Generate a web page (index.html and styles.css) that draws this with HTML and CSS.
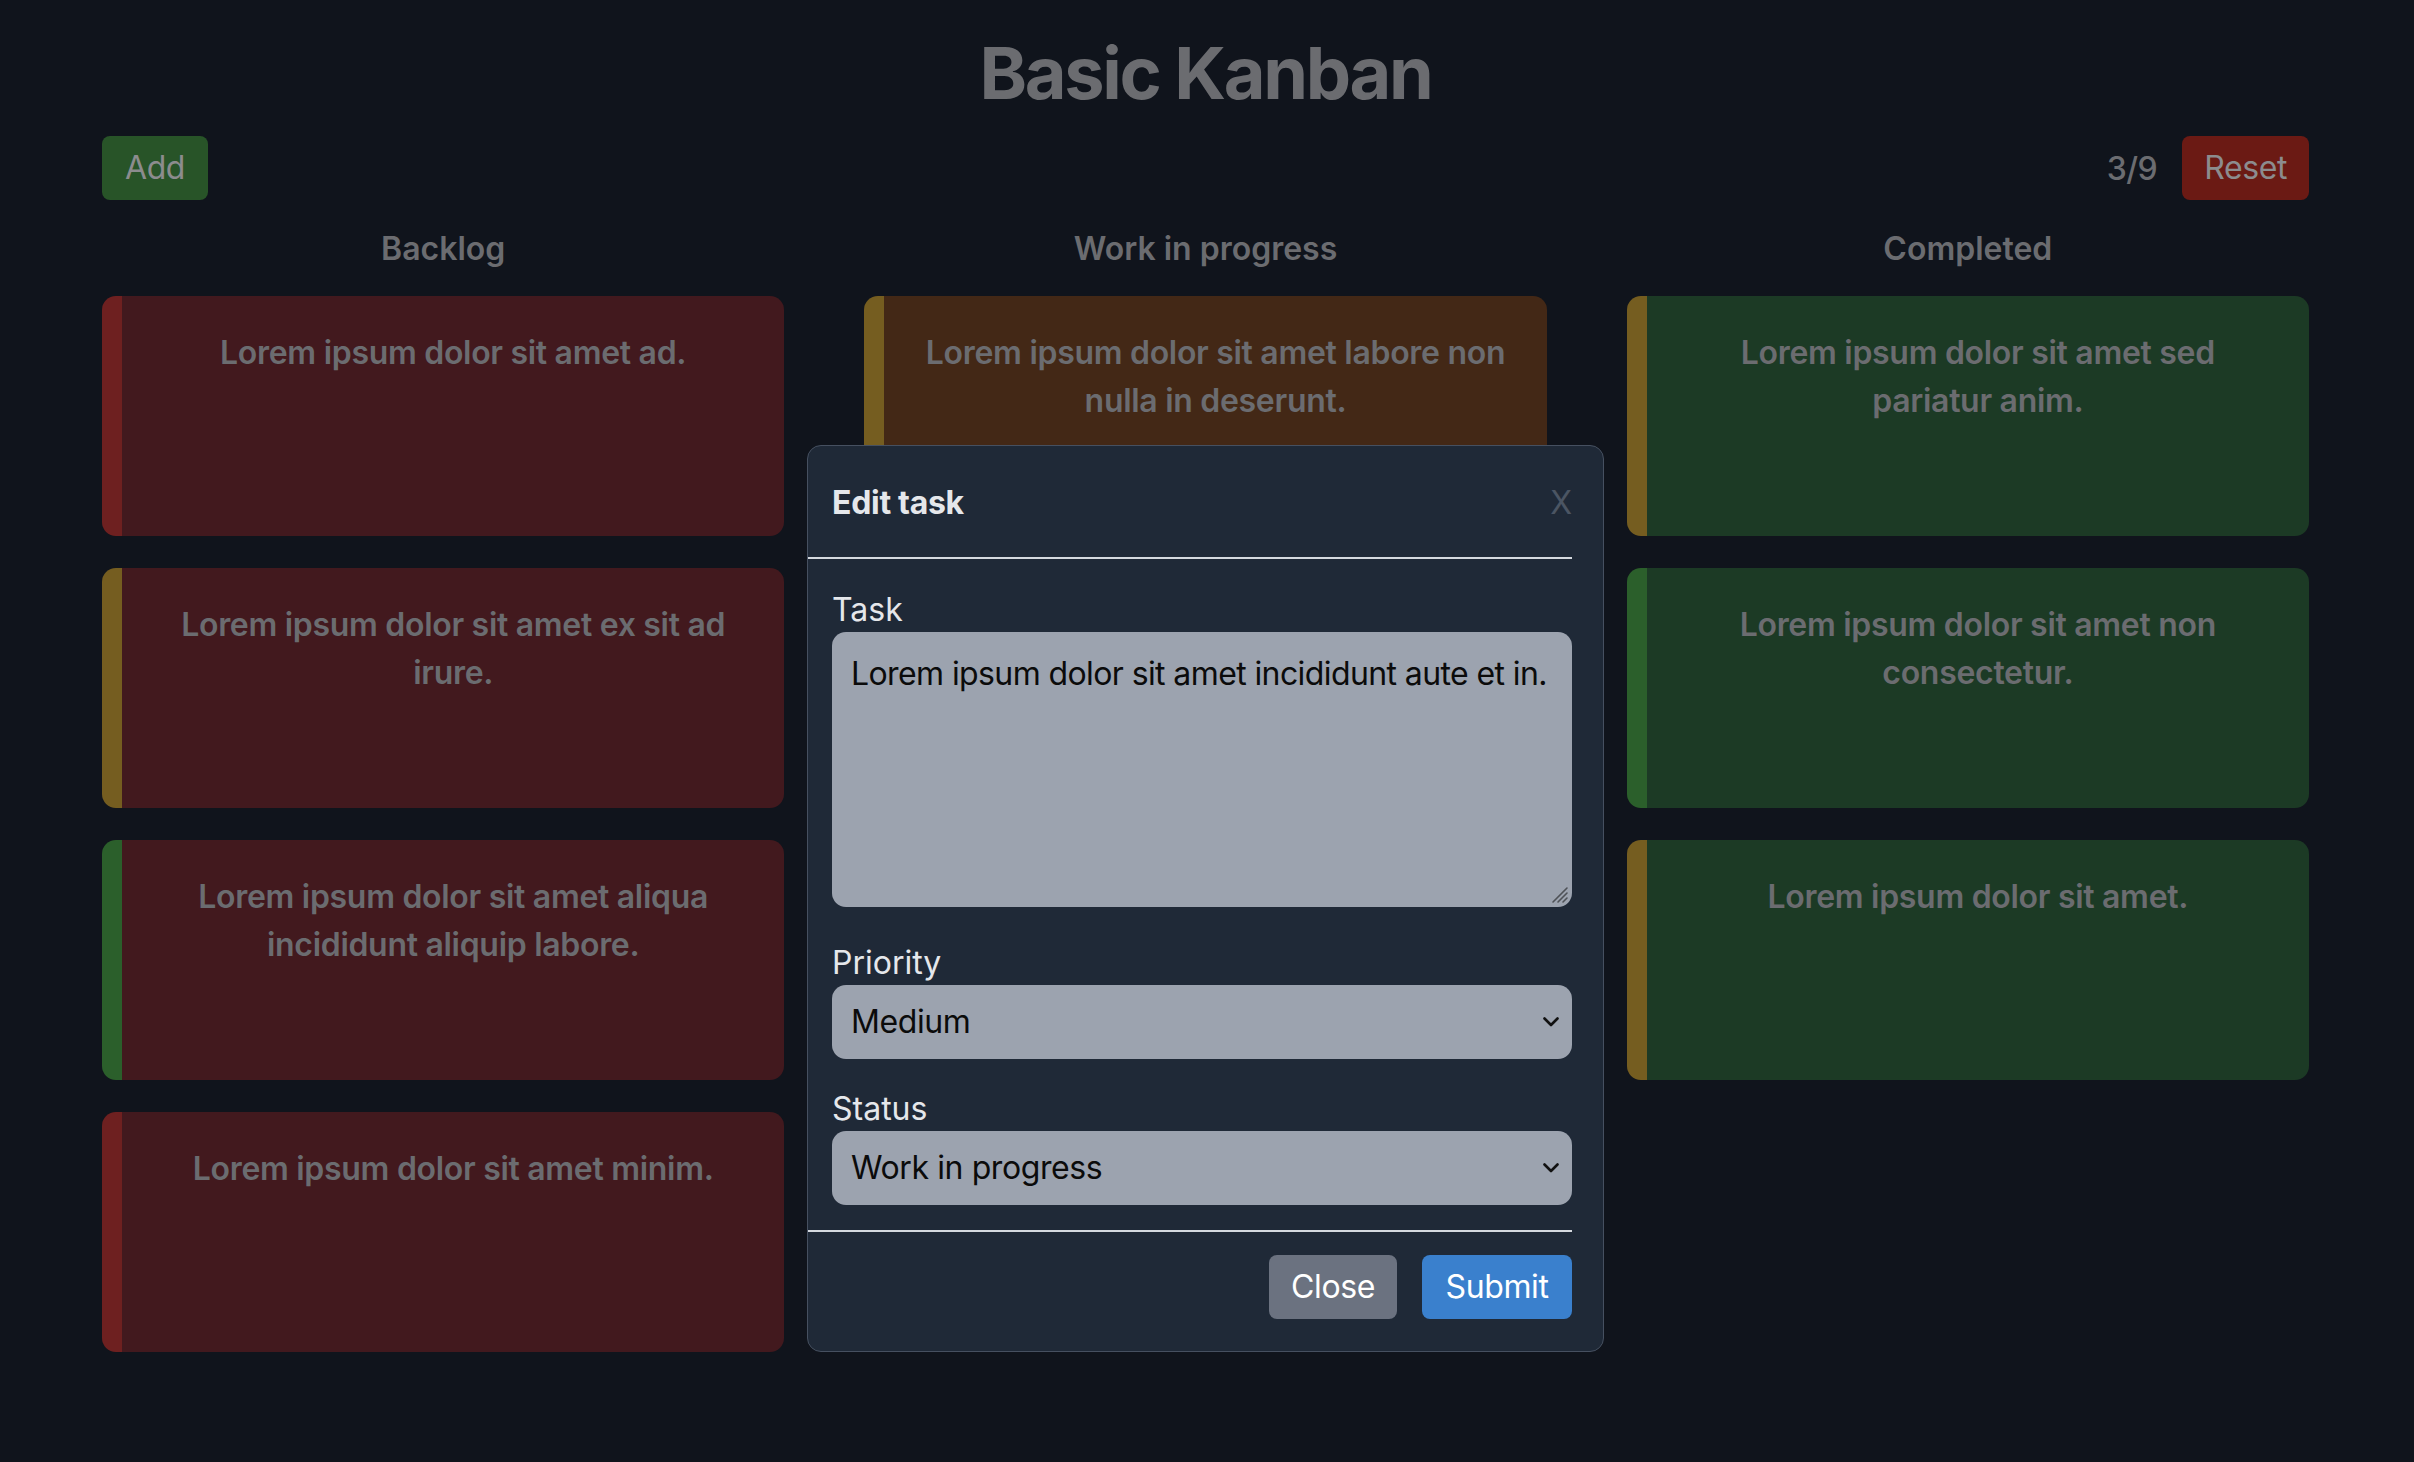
FILE: index.html
```html
<!DOCTYPE html>
<html lang="en">
<head>
<meta charset="utf-8">
<title>Basic Kanban</title>
<link rel="stylesheet" href="styles.css">
</head>
<body>
<div class="page">
  <h1 class="title">Basic Kanban</h1>
  <div class="toolbar">
    <button class="btn btn-add">Add</button>
    <div class="toolbar-right">
      <span class="count">3/9</span>
      <button class="btn btn-reset">Reset</button>
    </div>
  </div>
  <div class="board">
    <section class="column">
      <h2 class="column-title">Backlog</h2>
      <div class="card card-backlog stripe-high"><p>Lorem ipsum dolor sit amet ad.</p></div>
      <div class="card card-backlog stripe-medium"><p>Lorem ipsum dolor sit amet ex sit ad<br>irure.</p></div>
      <div class="card card-backlog stripe-low"><p>Lorem ipsum dolor sit amet aliqua<br>incididunt aliquip labore.</p></div>
      <div class="card card-backlog stripe-high"><p>Lorem ipsum dolor sit amet minim.</p></div>
    </section>
    <section class="column">
      <h2 class="column-title">Work in progress</h2>
      <div class="card card-wip stripe-medium"><p>Lorem ipsum dolor sit amet labore non<br>nulla in deserunt.</p></div>
      <div class="card card-wip stripe-medium"><p>Lorem ipsum dolor sit amet incididunt aute et in.</p></div>
    </section>
    <section class="column">
      <h2 class="column-title">Completed</h2>
      <div class="card card-done stripe-medium"><p>Lorem ipsum dolor sit amet sed<br>pariatur anim.</p></div>
      <div class="card card-done stripe-low"><p>Lorem ipsum dolor sit amet non<br>consectetur.</p></div>
      <div class="card card-done stripe-medium"><p>Lorem ipsum dolor sit amet.</p></div>
    </section>
  </div>
</div>

<div class="modal">
  <div class="modal-header">
    <h3 class="modal-title">Edit task</h3>
    <span class="modal-close">X</span>
  </div>
  <hr class="modal-rule">
  <div class="modal-body">
    <div class="field field-task">
      <label class="field-label" for="task">Task</label>
      <div class="textarea-wrap">
        <textarea id="task" class="field-input field-textarea">Lorem ipsum dolor sit amet incididunt aute et in.</textarea>
        <svg class="grip" width="24" height="24" viewBox="0 0 24 24"><path d="M22 8 L8 22 M22 13 L13 22 M22 18 L18 22" fill="none" stroke="#4e5257" stroke-width="1.6" stroke-linecap="round"/></svg>
      </div>
    </div>
    <div class="field field-priority">
      <label class="field-label" for="priority">Priority</label>
      <div class="select-wrap">
        <select id="priority" class="field-input field-select">
          <option>Low</option>
          <option selected>Medium</option>
          <option>High</option>
        </select>
        <svg class="chevron" width="16" height="10" viewBox="0 0 16 10"><path d="M1.5 1.5 L8 8 L14.5 1.5" fill="none" stroke="#111" stroke-width="2.6" stroke-linecap="round" stroke-linejoin="round"/></svg>
      </div>
    </div>
    <div class="field">
      <label class="field-label" for="status">Status</label>
      <div class="select-wrap">
        <select id="status" class="field-input field-select">
          <option>Backlog</option>
          <option selected>Work in progress</option>
          <option>Completed</option>
        </select>
        <svg class="chevron" width="16" height="10" viewBox="0 0 16 10"><path d="M1.5 1.5 L8 8 L14.5 1.5" fill="none" stroke="#111" stroke-width="2.6" stroke-linecap="round" stroke-linejoin="round"/></svg>
      </div>
    </div>
  </div>
  <hr class="modal-rule modal-rule-footer">
  <div class="modal-footer">
    <button class="btn btn-close">Close</button>
    <button class="btn btn-submit">Submit</button>
  </div>
</div>
</body>
</html>
```
FILE: styles.css
```css
* { box-sizing: border-box; }

html, body {
  margin: 0;
  padding: 0;
}

body {
  background: #10141c;
  font-family: Inter, "Noto Sans", "Liberation Sans", sans-serif;
  color: #6b6c70;
  min-height: 1462px;
  position: relative;
}

.page {
  padding: 0 105px 0 102px;
}

.title {
  margin: 30px 0 0;
  font-size: 72px;
  line-height: 86px;
  font-weight: 700;
  text-align: center;
  letter-spacing: -2.3px;
  color: #6b6c70;
}

.toolbar {
  margin-top: 20px;
  display: flex;
  justify-content: space-between;
  align-items: center;
  height: 64px;
}

.toolbar-right {
  display: flex;
  align-items: center;
  gap: 25px;
}

.count {
  font-size: 32px;
  font-weight: 500;
  color: #6b6c70;
  letter-spacing: -0.5px;
}

.btn {
  font-family: inherit;
  font-size: 32px;
  line-height: 48px;
  height: 64px;
  padding: 0 23px;
  border: none;
  border-radius: 8px;
  cursor: pointer;
  letter-spacing: -0.4px;
}

.btn-add {
  background: #285428;
  color: #8c8c8e;
}

.btn-reset {
  background: #6b1a14;
  color: #8c8c8e;
  padding: 0 22px;
}

.board {
  margin-top: 25px;
  display: grid;
  grid-template-columns: repeat(3, 1fr);
  column-gap: 80px;
}

.column {
  display: flex;
  flex-direction: column;
  gap: 32px;
}

.column-title {
  margin: 0 0 -9px;
  font-size: 32px;
  line-height: 48px;
  font-weight: 600;
  text-align: center;
  color: #6b6c70;
}

.card {
  height: 240px;
  border-radius: 14px;
  border-left: 20px solid transparent;
  padding: 33px 12px 0;
  text-align: center;
}

.card p {
  margin: 0;
  font-size: 32px;
  line-height: 48px;
  font-weight: 600;
  color: #6b6c70;
  letter-spacing: -0.3px;
}

.card-backlog { background: #42191e; }
.card-wip { background: #432816; }
.card-done { background: #1c3a25; }

.stripe-high { border-left-color: #6e2020; }
.stripe-medium { border-left-color: #755d20; }
.stripe-low { border-left-color: #2b5f2b; }

/* Modal overlay */
.modal {
  position: absolute;
  left: 807px;
  top: 445px;
  width: 797px;
  height: 907px;
  background: #1f2937;
  border: 1.5px solid #465060;
  border-radius: 14px;
  padding: 33px 31px 0 0;
}

.modal-header {
  display: flex;
  justify-content: space-between;
  align-items: center;
  padding-left: 24px;
  height: 48px;
}

.modal-title {
  margin: 0;
  font-size: 32px;
  line-height: 48px;
  font-weight: 700;
  color: #e5e7eb;
  letter-spacing: -0.3px;
}

.modal-close {
  font-size: 32px;
  line-height: 48px;
  color: #4b5563;
  font-weight: 400;
}

.modal-rule {
  margin: 30px 0 0;
  border: none;
  height: 2px;
  background: #d5d9df;
}

.modal-body {
  padding: 29px 0 0 24px;
}

.field {
  margin-top: 28px;
}

.field-task {
  margin-top: 0;
}

.field-priority {
  margin-top: 34px;
}

.field-label {
  display: block;
  font-size: 32px;
  line-height: 44px;
  color: #e5e7eb;
}

.field-input {
  display: block;
  width: 100%;
  background: #9ca3af;
  border: none;
  border-radius: 14px;
  font-family: inherit;
  font-size: 32px;
  color: #0b0b0b;
  outline: none;
  letter-spacing: -0.4px;
}

.textarea-wrap {
  position: relative;
}

.field-textarea {
  height: 275px;
  padding: 18px 6px 18px 19px;
  line-height: 48px;
  resize: none;
  letter-spacing: -0.6px;
}

.grip {
  position: absolute;
  right: 3px;
  bottom: 3px;
  pointer-events: none;
}

.select-wrap {
  position: relative;
}

.field-select {
  appearance: none;
  -webkit-appearance: none;
  height: 74px;
  padding: 0 60px 0 19px;
  line-height: 48px;
}

.chevron {
  position: absolute;
  right: 13px;
  top: 32px;
  pointer-events: none;
}

.modal-rule-footer {
  margin-top: 25px;
}

.modal-footer {
  display: flex;
  justify-content: flex-end;
  gap: 25px;
  padding-top: 23px;
}

.btn-close {
  background: #6b7280;
  color: #ffffff;
  width: 128px;
  padding: 0;
  font-weight: 400;
}

.btn-submit {
  background: #3a80cd;
  color: #ffffff;
  width: 150px;
  padding: 0;
  font-weight: 400;
}
```
